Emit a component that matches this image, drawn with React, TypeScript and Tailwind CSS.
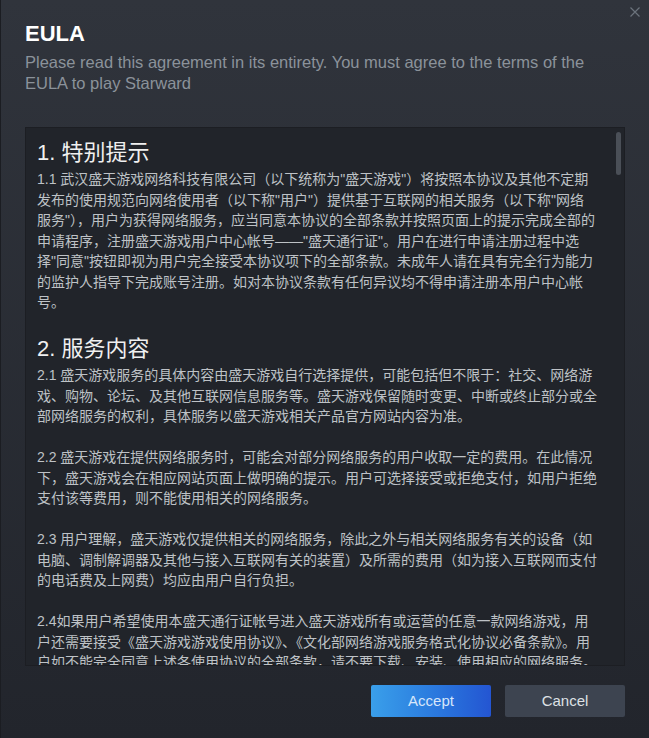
// Lines are kept as they break in the client so the wrap matches exactly.
const SECTIONS: { title: string; paragraphs: string[][] }[] = [
  {
    title: "1. 特别提示",
    paragraphs: [
      [
        '1.1 武汉盛天游戏网络科技有限公司（以下统称为"盛天游戏"）将按照本协议及其他不定期',
        '发布的使用规范向网络使用者（以下称"用户"）提供基于互联网的相关服务（以下称"网络',
        '服务"），用户为获得网络服务，应当同意本协议的全部条款并按照页面上的提示完成全部的',
        '申请程序，注册盛天游戏用户中心帐号——"盛天通行证"。用户在进行申请注册过程中选',
        '择"同意"按钮即视为用户完全接受本协议项下的全部条款。未成年人请在具有完全行为能力',
        "的监护人指导下完成账号注册。如对本协议条款有任何异议均不得申请注册本用户中心帐",
        "号。",
      ],
    ],
  },
  {
    title: "2. 服务内容",
    paragraphs: [
      [
        "2.1 盛天游戏服务的具体内容由盛天游戏自行选择提供，可能包括但不限于：社交、网络游",
        "戏、购物、论坛、及其他互联网信息服务等。盛天游戏保留随时变更、中断或终止部分或全",
        "部网络服务的权利，具体服务以盛天游戏相关产品官方网站内容为准。",
      ],
      [
        "2.2 盛天游戏在提供网络服务时，可能会对部分网络服务的用户收取一定的费用。在此情况",
        "下，盛天游戏会在相应网站页面上做明确的提示。用户可选择接受或拒绝支付，如用户拒绝",
        "支付该等费用，则不能使用相关的网络服务。",
      ],
      [
        "2.3 用户理解，盛天游戏仅提供相关的网络服务，除此之外与相关网络服务有关的设备（如",
        "电脑、调制解调器及其他与接入互联网有关的装置）及所需的费用（如为接入互联网而支付",
        "的电话费及上网费）均应由用户自行负担。",
      ],
      [
        "2.4如果用户希望使用本盛天通行证帐号进入盛天游戏所有或运营的任意一款网络游戏，用",
        "户还需要接受《盛天游戏游戏使用协议》、《文化部网络游戏服务格式化协议必备条款》。用",
        "户如不能完全同意上述各使用协议的全部条款，请不要下载、安装、使用相应的网络服务。",
      ],
    ],
  },
];

function CloseIcon() {
  return (
    <svg width="10" height="10" viewBox="0 0 10 10" fill="none">
      <path d="M0.5 0.5L9.5 9.5M9.5 0.5L0.5 9.5" stroke="#6b737c" strokeWidth="1.2" />
    </svg>
  );
}

export default function App() {
  return (
    <div className="relative flex h-[738px] w-[649px] flex-col overflow-hidden border-l border-[#1b1d22] bg-linear-to-b from-[#30343c] to-[#22252c] font-['Liberation_Sans','Noto_Sans_CJK_SC',sans-serif]">
      <button type="button" className="absolute right-[9px] top-[7px]">
        <CloseIcon />
      </button>

      <div className="px-[24px] pt-[20px]">
        <h1 className="text-[22px] font-bold leading-[28px] text-white">EULA</h1>
        <p className="mt-[4px] text-[16.5px] leading-[21px] text-[#8b929a]">
          Please read this agreement in its entirety. You must agree to the terms of the EULA to play
          Starward
        </p>
      </div>

      <div className="relative mx-[24px] mt-[33px] h-[539px] overflow-hidden border border-[#1c1e23] bg-[#21242a]">
        <div className="pl-[11px] pr-[12px] pt-[9px]">
          {SECTIONS.map((section, i) => (
            <section key={section.title}>
              {i > 0 && <div className="h-[20.5px]" />}
              <h2 className="text-[22px] leading-[32px] text-[#f0f0f0]">{section.title}</h2>
              {section.paragraphs.map((lines, j) => (
                <div key={j}>
                  {j > 0 && <div className="h-[20.5px]" />}
                  <p className="text-[14px] leading-[20.5px] text-[#bec2c6]">
                    {lines.map((line, k) => (
                      <span key={k} className="block whitespace-nowrap">
                        {line}
                      </span>
                    ))}
                  </p>
                </div>
              ))}
            </section>
          ))}
        </div>
        <div className="absolute right-[3px] top-[4px] h-[43px] w-[5px] rounded-full bg-[#4a4f57]" />
      </div>

      <div className="mt-[19px] flex justify-end gap-[14px] pr-[24px]">
        <button
          type="button"
          className="h-[32px] w-[120px] rounded-[2px] bg-linear-to-r from-[#3a9fea] to-[#2455d2] text-[15px] text-[#d6e6fa]"
        >
          Accept
        </button>
        <button
          type="button"
          className="h-[32px] w-[120px] rounded-[2px] bg-[#3d4450] text-[15px] text-[#dde1e5]"
        >
          Cancel
        </button>
      </div>
    </div>
  );
}
